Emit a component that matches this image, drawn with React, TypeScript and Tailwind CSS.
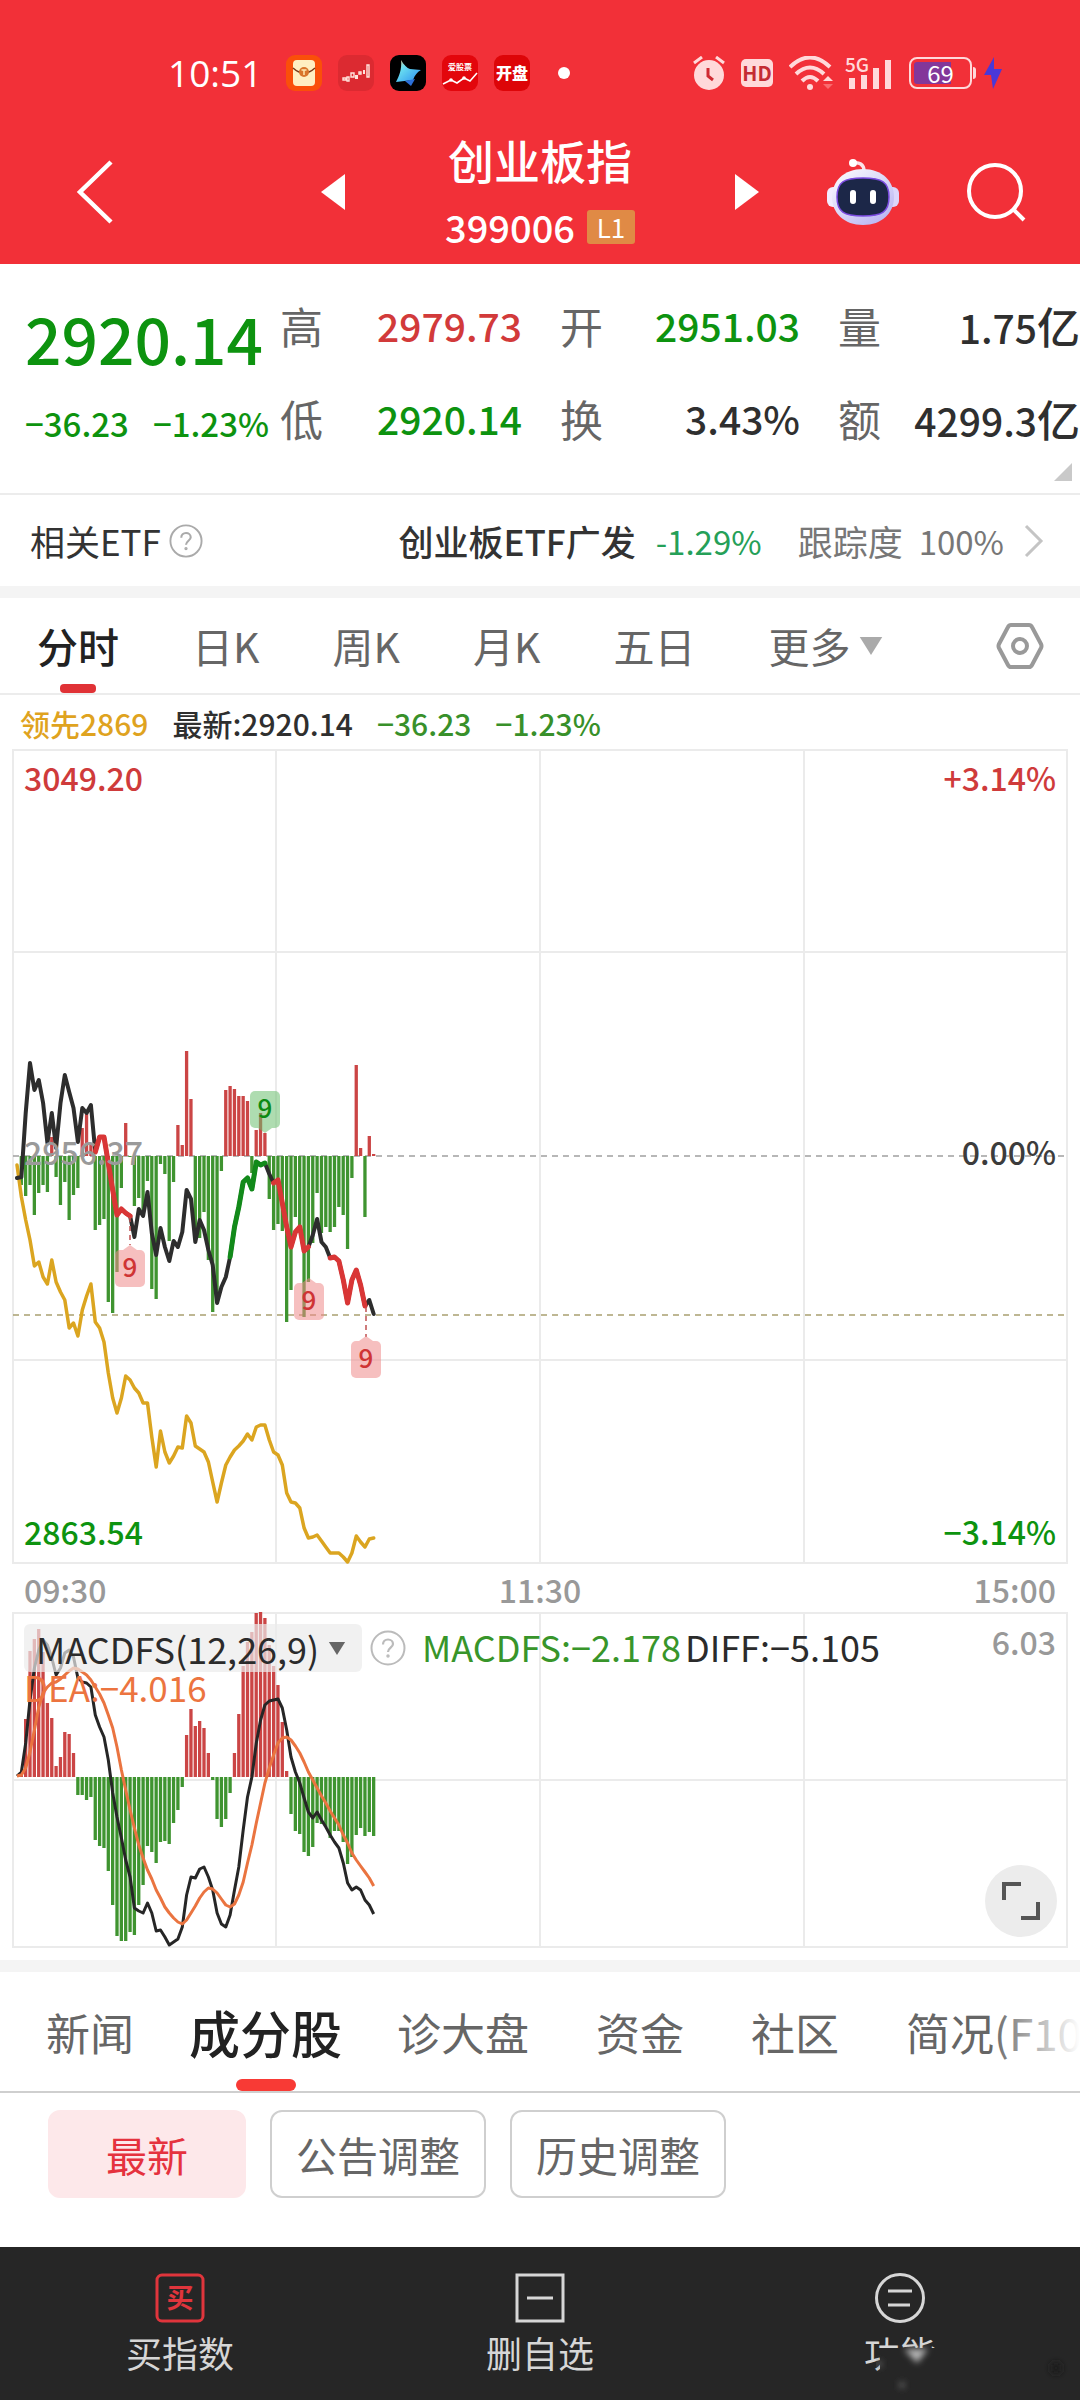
import { useState } from 'react';

const STEP = 4.35;
const X0 = 17;
const ZERO = 407;
const MACD_ZERO = 165;

// offsets from the zero line, one per minute, positive is down
const volume = [
    0, 29, 40, 29, 59, 37, 29, 36, -19, 21, 49, 26, 64, 39, 32, -28, -43, -12, 74, 69, 63, 146, 157, 116, 32, -33, 1, 50,
    42, 54, 25, 133, 143, 8, 18, 85, 26, -31, -11, -105, -57, 84, 82, 56, 104, 156, 141, 15, -66, -70, -67, -60, -60, -55,
    17, -26, -43, -23, 43, 74, 68, 75, 166, 134, 61, 74, 161, 126, 87, 37, 77, 71, 76, 71, 51, 59, 93, 22, -91, -8, 61,
    -20, -2,
];

const price = [
    429, 428, 364, 314, 341, 331, 354, 394, 364, 399, 354, 326, 343, 359, 393, 359, 364, 356, 403, 388, 388, 414, 441,
    466, 460, 464, 467, 488, 460, 467, 443, 484, 506, 479, 498, 512, 492, 498, 483, 441, 450, 493, 471, 481, 501, 516,
    554, 538, 528, 508, 478, 458, 433, 429, 440, 413, 416, 414, 425, 434, 431, 454, 478, 498, 483, 478, 502, 498, 486,
    470, 493, 498, 509, 508, 512, 531, 554, 531, 521, 536, 557, 551, 565,
];

const leading = [
    416, 448, 471, 491, 517, 513, 528, 535, 511, 533, 543, 551, 579, 574, 587, 561, 547, 535, 573, 579, 593, 624, 649,
    664, 649, 627, 631, 639, 644, 654, 654, 688, 718, 682, 703, 714, 707, 698, 699, 667, 674, 697, 700, 703, 713, 733,
    753, 734, 716, 708, 701, 697, 692, 685, 691, 678, 676, 676, 691, 703, 706, 716, 744, 753, 754, 759, 779, 789, 788,
    786, 792, 798, 804, 804, 804, 808, 813, 804, 787, 793, 798, 790, 789,
];

const macd = [
    0, -5, -58, -126, -138, -148, -125, -74, -59, -11, -20, -45, -43, -24, 18, 18, 23, 20, 63, 69, 71, 94, 128, 159, 164,
    164, 155, 158, 128, 108, 69, 75, 86, 65, 64, 67, 46, 33, 10, -42, -68, -51, -56, -49, -24, 3, 42, 50, 42, 16, -24,
    -63, -111, -135, -145, -164, -165, -159, -132, -111, -92, -55, -6, 37, 54, 57, 75, 79, 70, 46, 47, 50, 61, 54, 54, 65,
    87, 80, 58, 51, 59, 55, 59,
];

const diff = [
    164, 160, 131, 88, 56, 38, 28, 33, 46, 63, 56, 41, 38, 45, 66, 70, 71, 75, 103, 115, 125, 148, 181, 205, 226, 248,
    265, 296, 299, 301, 291, 301, 319, 318, 325, 333, 330, 327, 315, 283, 265, 266, 257, 255, 265, 278, 301, 312, 315,
    303, 278, 255, 218, 185, 165, 131, 108, 93, 89, 88, 87, 96, 118, 145, 160, 171, 186, 200, 206, 200, 208, 215, 223,
    230, 236, 251, 271, 278, 275, 278, 288, 293, 302,
];

const dea = [
    164, 163, 156, 140, 118, 95, 81, 75, 71, 70, 67, 63, 59, 56, 57, 60, 63, 68, 75, 82, 91, 103, 116, 135, 158, 178,
    198, 216, 233, 246, 258, 267, 278, 286, 295, 301, 306, 310, 312, 308, 301, 294, 286, 280, 276, 277, 281, 287, 293,
    295, 292, 283, 270, 251, 233, 211, 191, 171, 156, 143, 131, 126, 125, 128, 134, 141, 150, 160, 168, 176, 184, 191,
    199, 206, 213, 223, 231, 241, 248, 254, 260, 266, 274,
];

const px = (i: number) => X0 + i * STEP;
const points = (data: number[], from = 0, to = data.length - 1) =>
    data
        .slice(from, to + 1)
        .map((y, i) => `${px(from + i).toFixed(1)},${y}`)
        .join(' ');

function Bars({ data, zero }: { data: number[]; zero: number }) {
    return (
        <g>
            {data.map((v, i) => (
                <rect
                    key={i}
                    x={px(i) - 1.7}
                    y={v < 0 ? zero + v : zero}
                    width={3.3}
                    height={Math.abs(v)}
                    fill={v < 0 ? '#cb4545' : '#3f9430'}
                />
            ))}
        </g>
    );
}

function Tag({ x, y, up }: { x: number; y: number; up?: boolean }) {
    return (
        <g>
            <path
                d={up ? `M${x - 7} ${y + 37}h14l-7 5z` : `M${x - 7} ${y}h14l-7 -5z`}
                fill={up ? '#6cc070' : '#ee8a8a'}
                fillOpacity={0.55}
            />
            <rect x={x - 15} y={y} width={30} height={37} rx={5} fill={up ? '#6cc070' : '#ee8a8a'} fillOpacity={0.55} />
            <text
                x={x}
                y={y + 27}
                textAnchor="middle"
                fontSize={26}
                fontWeight={500}
                fill={up ? '#0c8a12' : '#cf3434'}
            >
                9
            </text>
        </g>
    );
}

function Triangle({ className }: { className: string }) {
    return (
        <svg viewBox="0 0 20 16" className={className} fill="currentColor" aria-hidden="true">
            <path d="M0 0h20L10 16z" />
        </svg>
    );
}

function Help({ className }: { className: string }) {
    return (
        <svg viewBox="0 0 36 36" className={className} fill="none" stroke="currentColor" aria-hidden="true">
            <circle cx="18" cy="18" r="16.5" strokeWidth="2" />
            <path d="M13 14.5c0-3 2.2-5 5-5s5 1.9 5 4.5c0 3.5-5 4-5 8" strokeWidth="2.2" />
            <circle cx="18" cy="26" r="1" strokeWidth="1.5" />
        </svg>
    );
}

function StatusBar() {
    return (
        <div className="flex h-[40px] items-center justify-between pr-[78px] pl-[168px]">
            <div className="flex items-center gap-4">
                <time className="mr-2 font-['Open_Sans','Noto_Sans_CJK_SC',sans-serif] text-[37px] leading-[40px]">10:51</time>
                <svg viewBox="0 0 36 36" className="size-[36px]" aria-hidden="true">
                    <rect width="36" height="36" rx="9" fill="#fa4f0a" />
                    <rect x="7" y="5" width="22" height="26" rx="4" fill="#ffeec2" />
                    <path d="M7 13q11 10 22 0" fill="none" stroke="#7a3a1a" strokeWidth="1.5" />
                    <circle cx="18" cy="17" r="5" fill="#d9752c" />
                    <path d="M15.5 15h5M18 15v5" stroke="#ffe6b0" strokeWidth="1.5" />
                </svg>
                <svg viewBox="0 0 36 36" className="size-[36px]" aria-hidden="true">
                    <rect width="36" height="36" rx="9" fill="#dc2a31" />
                    <g fill="none" stroke="#ffe3dc" strokeWidth="1.4">
                        <path d="M5 23h3v2H5zM9 22h2v4H9zM13 18h3v4h-3zM21 17h2v2h-2zM29 10h2v12h-2z" />
                    </g>
                    <path d="M17 20h3v4h-3zM25 15h2v4h-2z" fill="#ffe3dc" />
                </svg>
                <svg viewBox="0 0 36 36" className="size-[36px]" aria-hidden="true">
                    <defs>
                        <linearGradient id="star" x1="0" y1="0" x2="1" y2="1">
                            <stop offset="0" stopColor="#ffb066" />
                            <stop offset="0.3" stopColor="#6be0f0" />
                            <stop offset="1" stopColor="#2a8cf0" />
                        </linearGradient>
                    </defs>
                    <rect width="36" height="36" rx="9" fill="#000" />
                    <path d="M11 5c3 5 6 8 9 9l11 1c-4 2-6 5-8 10L6 27c3-6 6-12 5-22z" fill="url(#star)" />
                    <path d="M15 26l10-2-4 7z" fill="#2b6fd8" />
                </svg>
                <svg viewBox="0 0 36 36" className="size-[36px]" aria-hidden="true">
                    <rect width="36" height="36" rx="9" fill="#e3060c" />
                    <text x="18" y="15" textAnchor="middle" fontSize="8" fontWeight="700" fill="#fff">
                        爱股票
                    </text>
                    <path d="M1 29l8-4 6 3 7-5 6 3 7-8" fill="none" stroke="#fff" strokeWidth="1.6" />
                    <circle cx="9" cy="25" r="1.8" fill="#fff" />
                    <circle cx="22" cy="23" r="1.8" fill="#fff" />
                </svg>
                <svg viewBox="0 0 36 36" className="size-[36px]" aria-hidden="true">
                    <rect width="36" height="36" rx="9" fill="#dd0508" />
                    <text x="18" y="24" textAnchor="middle" fontSize="16" fontWeight="900" fill="#fff">
                        开盘
                    </text>
                </svg>
                <span className="ml-3 size-[12px] rounded-full bg-white" />
            </div>

            <div className="flex items-center text-[#ffd9da]">
                <svg viewBox="0 0 32 34" className="h-[34px] w-[32px]" aria-hidden="true">
                    <circle cx="16" cy="19" r="15" fill="currentColor" />
                    <path d="M1 7l8-6M31 7l-8-6" stroke="currentColor" strokeWidth="3" />
                    <path d="M15 12v8l5 4" fill="none" stroke="#d02a32" strokeWidth="3" />
                </svg>
                <span className="ml-4 flex h-[28px] w-[32px] items-center justify-center rounded-[5px] bg-[#ffd9da] text-[20px] font-bold text-[#c42c33]">
                    HD
                </span>
                <svg viewBox="0 0 44 34" className="ml-4 h-[34px] w-[44px]" fill="none" aria-hidden="true">
                    <path d="M1 11q20-19 40 0M7 18q14-13 28 0M13 25q8-8 16 0" stroke="currentColor" strokeWidth="4" />
                    <circle cx="21" cy="31" r="3" fill="currentColor" />
                    <path d="M34 25l5-5 5 5z" fill="currentColor" />
                    <path d="M34 28l5 5 5-5z" fill="#fa6a6e" />
                </svg>
                <svg viewBox="0 0 48 46" className="ml-3 h-[46px] w-[48px]" fill="currentColor" aria-hidden="true">
                    <text x="0" y="22" fontSize="19" fontWeight="500">
                        5G
                    </text>
                    <path d="M4 28h6v11H4zM16 25h6v14h-6zM28 18h6v21h-6zM40 10h6v29h-6z" />
                </svg>
                <div className="ml-4 flex h-[32px] w-[63px] rounded-[8px] border-2 border-[#ffd9da] p-[3px]">
                    <span className="flex h-full w-full items-center justify-center rounded-[3px] bg-linear-to-r from-[#83379a] from-70% to-transparent to-70% text-[24px] text-white">
                        69
                    </span>
                </div>
                <span className="ml-px h-[12px] w-[3px] rounded-r bg-[#ffd9da]" />
                <svg viewBox="0 0 18 32" className="ml-2 h-[32px] w-[18px]" aria-hidden="true">
                    <path d="M10 0L0 18h7L9 32 18 12h-8z" fill="#4a38d8" />
                </svg>
            </div>
        </div>
    );
}

function Header() {
    return (
        <header className="bg-[#f23038] pt-[53px] pb-1 text-white">
            <StatusBar />
            <div className="mt-[31px] grid grid-cols-[1fr_390px_1fr] items-center">
                <div className="flex items-center justify-between pl-[76px]">
                    <button type="button" aria-label="返回">
                        <svg viewBox="0 0 38 64" className="h-[64px] w-[38px]" fill="none" stroke="currentColor">
                            <path d="M35 2L4 32l31 30" strokeWidth="4.5" />
                        </svg>
                    </button>
                    <button type="button" aria-label="上一个">
                        <svg viewBox="0 0 24 36" className="h-[36px] w-[24px]" fill="currentColor">
                            <path d="M24 0v36L0 18z" />
                        </svg>
                    </button>
                </div>
                <div className="text-center">
                    <h1 className="text-[46px] leading-[70px] font-medium">创业板指</h1>
                    <div className="flex items-center justify-center gap-3 text-[38px] leading-[66px] font-medium">
                        399006
                        <span className="flex h-[34px] w-[48px] items-center justify-center rounded-[3px] bg-[#e08a45] text-[26px] font-normal">
                            L1
                        </span>
                    </div>
                </div>
                <div className="flex items-center justify-between pr-[54px]">
                    <button type="button" aria-label="下一个">
                        <svg viewBox="0 0 24 36" className="h-[36px] w-[24px]" fill="currentColor">
                            <path d="M0 0v36l24-18z" />
                        </svg>
                    </button>
                    <button type="button" aria-label="智能助手">
                        <svg viewBox="0 0 72 68" className="h-[68px] w-[72px]">
                            <defs>
                                <linearGradient id="shell" x1="0" y1="0" x2="0.8" y2="1">
                                    <stop offset="0" stopColor="#fff" />
                                    <stop offset="1" stopColor="#b9b4f2" />
                                </linearGradient>
                            </defs>
                            <path d="M26 5c6-1 11 1 11 8" fill="none" stroke="#fbe3ea" strokeWidth="3.5" />
                            <circle cx="26" cy="5" r="4" fill="#fff" />
                            <rect x="0" y="29" width="14" height="20" rx="6" fill="#f2ecff" />
                            <rect x="58" y="29" width="14" height="20" rx="6" fill="#dcd6fb" />
                            <path d="M36 11c19 0 31 12 31 28S55 67 36 67 5 55 5 39s12-28 31-28z" fill="url(#shell)" />
                            <path
                                d="M36 20c19 0 26 4 26 19s-7 19-26 19-26-4-26-19 7-19 26-19z"
                                fill="#1c2748"
                                stroke="#7a4be0"
                                strokeWidth="1.5"
                            />
                            <rect x="23" y="32" width="6" height="14" rx="3" fill="#fff" />
                            <rect x="43" y="32" width="6" height="14" rx="3" fill="#fff" />
                        </svg>
                    </button>
                    <button type="button" aria-label="搜索">
                        <svg viewBox="0 0 60 60" className="size-[60px]" fill="none" stroke="currentColor" strokeWidth="4">
                            <circle cx="29" cy="29" r="26" />
                            <path d="M47 47l11 11" />
                        </svg>
                    </button>
                </div>
            </div>
        </header>
    );
}

const quotes = [
    { label: '高', value: '2979.73', color: 'text-[#d23a3a]' },
    { label: '开', value: '2951.03', color: 'text-[#0d930f]' },
    { label: '量', value: '1.75', unit: '亿', color: 'text-[#2f2f2f]' },
    { label: '低', value: '2920.14', color: 'text-[#0d930f]' },
    { label: '换', value: '3.43%', color: 'text-[#2f2f2f]' },
    { label: '额', value: '4299.3', unit: '亿', color: 'text-[#2f2f2f]' },
];

function Quote() {
    return (
        <section className="relative flex h-[231px] items-start border-b-2 border-[#ececec] pt-[16px]">
            <div className="w-[280px] shrink-0 pl-[25px] text-[#0d930f]">
                <div className="text-[64px] leading-[114px] font-medium">2920.14</div>
                <div className="flex gap-6 text-[33px] leading-[58px] font-medium">
                    <span>−36.23</span>
                    <span>−1.23%</span>
                </div>
            </div>
            <dl className="grid flex-1 grid-cols-[242fr_278fr_280fr] text-[39px] leading-[91px]">
                {quotes.map((q, i) => (
                    <div key={q.label} className={`flex justify-between ${i % 3 ? 'pl-[38px]' : ''}`}>
                        <dt className="text-[43px] text-[#666]">{q.label}</dt>
                        <dd className={`font-medium ${q.color}`}>
                            {q.value}
                            {q.unit && <span className="text-[43px]">{q.unit}</span>}
                        </dd>
                    </div>
                ))}
            </dl>
            <svg viewBox="0 0 18 18" className="absolute right-2 bottom-3 size-[18px]" aria-hidden="true">
                <path d="M18 0v18H0z" fill="#c9c9c9" />
            </svg>
        </section>
    );
}

function RelatedEtf() {
    return (
        <a href="#etf" className="flex h-[91px] items-center pr-[36px] pl-[30px] text-[35px] leading-[88px] text-[#333]">
            <span>相关ETF</span>
            <Help className="ml-2 size-[34px] text-[#aaa]" />
            <span className="ml-auto font-medium">创业板ETF广发</span>
            <span className="ml-5 text-[33px] text-[#25a058]">-1.29%</span>
            <span className="ml-9 text-[#777]">跟踪度</span>
            <span className="ml-4 text-[33px] text-[#777]">100%</span>
            <svg viewBox="0 0 20 34" className="ml-5 h-[34px] w-[20px]" fill="none" stroke="#c4c4c4" aria-hidden="true">
                <path d="M2 2l15 15L2 32" strokeWidth="3" />
            </svg>
        </a>
    );
}

const periods = ['分时', '日K', '周K', '月K', '五日'];

function PeriodTabs() {
    const [active, setActive] = useState('分时');
    return (
        <nav className="flex h-[97px] items-center gap-[73px] border-b-2 border-[#ececec] pr-[36px] pl-[37px] text-[41px] leading-[95px] text-[#666]">
            {periods.map((p) => (
                <button
                    key={p}
                    type="button"
                    onClick={() => setActive(p)}
                    className={`relative ${p === active ? 'font-medium text-[#222]' : ''}`}
                >
                    {p}
                    {p === active && (
                        <span className="absolute bottom-0 left-1/2 h-[9px] w-[36px] -translate-x-1/2 rounded-[4px] bg-[#e03236]" />
                    )}
                </button>
            ))}
            <button type="button" className="flex items-center gap-2">
                更多
                <Triangle className="h-[18px] w-[24px] text-[#aaa]" />
            </button>
            <button type="button" aria-label="设置" className="ml-auto">
                <svg viewBox="0 0 48 46" className="h-[46px] w-[48px]" fill="none" stroke="#999" strokeWidth="4">
                    <path d="M15 2h18q2 0 3 2l9 17q1 2 0 4l-9 17q-1 2-3 2H15q-2 0-3-2L3 25q-1-2 0-4l9-17q1-2 3-2z" />
                    <circle cx="24" cy="23" r="7" />
                </svg>
            </button>
        </nav>
    );
}

function PriceChart() {
    return (
        <section>
            <div className="flex h-[54px] gap-6 pl-[20px] text-[30px] leading-[56px] font-medium text-[#38902a]">
                <span className="text-[#dfa31f]">领先2869</span>
                <span className="text-[#2f2f2f]">最新:2920.14</span>
                <span>−36.23</span>
                <span>−1.23%</span>
            </div>
            <svg viewBox="0 0 1080 816" className="block w-full font-medium" role="img" aria-label="分时走势">
                <g fill="none" stroke="#ebebeb" strokeWidth="2">
                    <path d="M13 1H1067V814H13zM276 1V814M540 1V814M804 1V814M13 203H1067M13 611H1067" />
                </g>
                <path d="M13 407H1067" stroke="#a0a0a0" strokeWidth="1.5" strokeDasharray="6 5" />
                <path d="M13 566H1067" stroke="#a9a070" strokeWidth="1.5" strokeDasharray="6 5" />
                <Bars data={volume} zero={ZERO} />
                <g fill="none" strokeLinejoin="round" strokeLinecap="round" strokeWidth="4">
                    <polyline points={points(leading)} stroke="#dba520" strokeWidth="3.5" />
                    <polyline points={points(price)} stroke="#2d2d2d" />
                    <polyline points={points(price, 18, 26)} stroke="#d93636" strokeWidth="5" />
                    <polyline points={points(price, 49, 57)} stroke="#128a1a" strokeWidth="5" />
                    <polyline points={points(price, 59, 67)} stroke="#d93636" strokeWidth="5" />
                    <polyline points={points(price, 72, 80)} stroke="#d93636" strokeWidth="5" />
                </g>
                <g stroke="#c05050" strokeWidth="1.5" strokeDasharray="5 4">
                    <path d="M130 468V496M366 558V588" />
                </g>
                <Tag x={130} y={501} />
                <Tag x={309} y={534} />
                <Tag x={366} y={592} />
                <Tag x={265} y={342} up />
                <g fontSize="32">
                    <text x="24" y="42" fill="#cf3b3b">
                        3049.20
                    </text>
                    <text x="24" y="416" fill="#9a9a9a">
                        2956.37
                    </text>
                    <text x="24" y="796" fill="#0d930f">
                        2863.54
                    </text>
                    <g textAnchor="end">
                        <text x="1056" y="42" fill="#cf3b3b">
                            +3.14%
                        </text>
                        <text x="1056" y="416" fill="#3c3c3c">
                            0.00%
                        </text>
                        <text x="1056" y="796" fill="#0d930f">
                            −3.14%
                        </text>
                    </g>
                </g>
            </svg>
            <div className="flex h-[47px] items-center justify-between px-[24px] text-[32px] leading-[42px] font-medium text-[#999]">
                <span>09:30</span>
                <span>11:30</span>
                <span>15:00</span>
            </div>
        </section>
    );
}

function MacdChart() {
    return (
        <section className="relative">
            <svg viewBox="0 0 1080 348" className="block w-full" role="img" aria-label="MACDFS">
                <path
                    d="M13 1H1067V335H13zM276 1V335M540 1V335M804 1V335M13 168H1067"
                    fill="none"
                    stroke="#ebebeb"
                    strokeWidth="2"
                />
                <Bars data={macd} zero={MACD_ZERO} />
                <g fill="none" strokeLinejoin="round" strokeWidth="3">
                    <polyline points={points(diff)} stroke="#262626" />
                    <polyline points={points(dea)} stroke="#ea7440" />
                </g>
            </svg>
            <div className="absolute inset-x-0 top-[12px] pr-[24px] pl-[24px] text-[36px] leading-[44px] whitespace-nowrap">
                <div className="flex h-[48px] items-start">
                    <button
                        type="button"
                        className="flex h-[48px] w-[338px] items-center gap-2 rounded-[6px] bg-[#ebebeb]/70 pl-[12px] text-[#2b2b2b]"
                    >
                        MACDFS(12,26,9)
                        <Triangle className="h-[13px] w-[20px] text-[#666]" />
                    </button>
                    <Help className="mt-[6px] mr-4 ml-2 size-[36px] text-[#bbb]" />
                    <span className="text-[#38952a]">MACDFS:−2.178</span>
                    <span className="ml-1 text-[#2b2b2b]">DIFF:−5.105</span>
                    <span className="ml-auto text-[32px] leading-[34px] font-medium text-[#999]">6.03</span>
                </div>
                <div className="text-[35px] leading-[30px] text-[#ec7440]">DEA:−4.016</div>
            </div>
            <button
                type="button"
                aria-label="全屏"
                className="absolute right-[23px] bottom-[23px] flex size-[72px] items-center justify-center rounded-full bg-[#ececec]"
            >
                <svg viewBox="0 0 38 38" className="size-[38px]" fill="none" stroke="#555" strokeWidth="4">
                    <path d="M2 18V2h17M36 20v16H19" />
                </svg>
            </button>
        </section>
    );
}

const sections = ['新闻', '成分股', '诊大盘', '资金', '社区', '简况(F10)'];
const filters = ['最新', '公告调整', '历史调整'];

function Details() {
    const [section, setSection] = useState('成分股');
    const [filter, setFilter] = useState('最新');
    return (
        <section>
            <nav className="relative flex h-[121px] gap-[67px] overflow-hidden border-b-2 border-[#cfcfcf] pl-[46px] text-[44px] leading-[118px] whitespace-nowrap text-[#666]">
                {sections.map((s) => (
                    <button
                        key={s}
                        type="button"
                        onClick={() => setSection(s)}
                        className={`relative shrink-0 ${s === section ? '-mx-3 text-[51px] font-medium text-[#222]' : ''}`}
                    >
                        {s}
                        {s === section && (
                            <span className="absolute bottom-0 left-1/2 h-[12px] w-[60px] -translate-x-1/2 rounded-[6px] bg-[#f83a35]" />
                        )}
                    </button>
                ))}
                <span className="pointer-events-none absolute inset-y-0 right-0 w-[90px] bg-linear-to-r from-transparent to-white" />
            </nav>
            <div className="flex gap-6 px-[48px] pt-[17px]">
                {filters.map((f) => (
                    <button
                        key={f}
                        type="button"
                        onClick={() => setFilter(f)}
                        className={`h-[88px] rounded-[12px] border-2 text-[41px] leading-[82px] ${
                            f === filter
                                ? 'border-[#fde8ea] bg-[#fde8ea] px-[56px] text-[#e5323e]'
                                : 'border-[#cfcfcf] px-[24px] text-[#666]'
                        }`}
                    >
                        {f}
                    </button>
                ))}
            </div>
        </section>
    );
}

function BottomBar() {
    return (
        <footer className="mt-[49px] grid h-[153px] grid-cols-3 bg-[#262626] pt-[26px] text-[36px] leading-[58px] text-[#d6d6d6]">
            <button type="button" className="flex flex-col items-center">
                <svg viewBox="0 0 50 50" className="size-[50px]">
                    <rect x="2" y="2" width="46" height="46" rx="5" fill="none" stroke="#e0353c" strokeWidth="3" />
                    <text x="25" y="35" textAnchor="middle" fontSize="27" fontWeight="700" fill="#e0353c">
                        买
                    </text>
                </svg>
                买指数
            </button>
            <button type="button" className="flex flex-col items-center">
                <svg viewBox="0 0 50 50" className="size-[50px]" fill="none" stroke="currentColor" strokeWidth="3">
                    <path d="M2 2h46v46H2zM12 25h26" />
                </svg>
                删自选
            </button>
            <button type="button" className="relative flex flex-col items-center">
                <svg viewBox="0 0 50 50" className="size-[50px]" fill="none" stroke="currentColor" strokeWidth="3">
                    <circle cx="25" cy="25" r="23.5" />
                    <path d="M13 18h24M13 32h22" />
                </svg>
                功能
                <svg viewBox="0 0 204 60" className="absolute right-0 bottom-0 h-[60px] w-[204px]" aria-hidden="true">
                    <defs>
                        <filter id="smudge" x="-50%" y="-50%" width="200%" height="200%">
                            <feGaussianBlur stdDeviation="3" />
                        </filter>
                    </defs>
                    <path d="M4 8H204V60H4z" fill="#262626" />
                    <g filter="url(#smudge)">
                        <path d="M28 9h24l-11 14z" fill="#b5b5b5" />
                        <circle cx="3" cy="24" r="3" fill="#666" />
                        <circle cx="26" cy="45" r="3" fill="#666" />
                        <circle cx="180" cy="28" r="6" fill="#1b1b1b" />
                    </g>
                </svg>
            </button>
        </footer>
    );
}

export default function App() {
    return (
        <div className="flex min-h-screen flex-col overflow-x-hidden bg-white font-['Noto_Sans_CJK_SC',sans-serif]">
            <Header />
            <Quote />
            <RelatedEtf />
            <div className="h-[12px] bg-[#f4f4f4]" />
            <PeriodTabs />
            <PriceChart />
            <MacdChart />
            <div className="h-[12px] bg-[#f4f4f4]" />
            <Details />
            <div className="flex-1" />
            <BottomBar />
        </div>
    );
}
